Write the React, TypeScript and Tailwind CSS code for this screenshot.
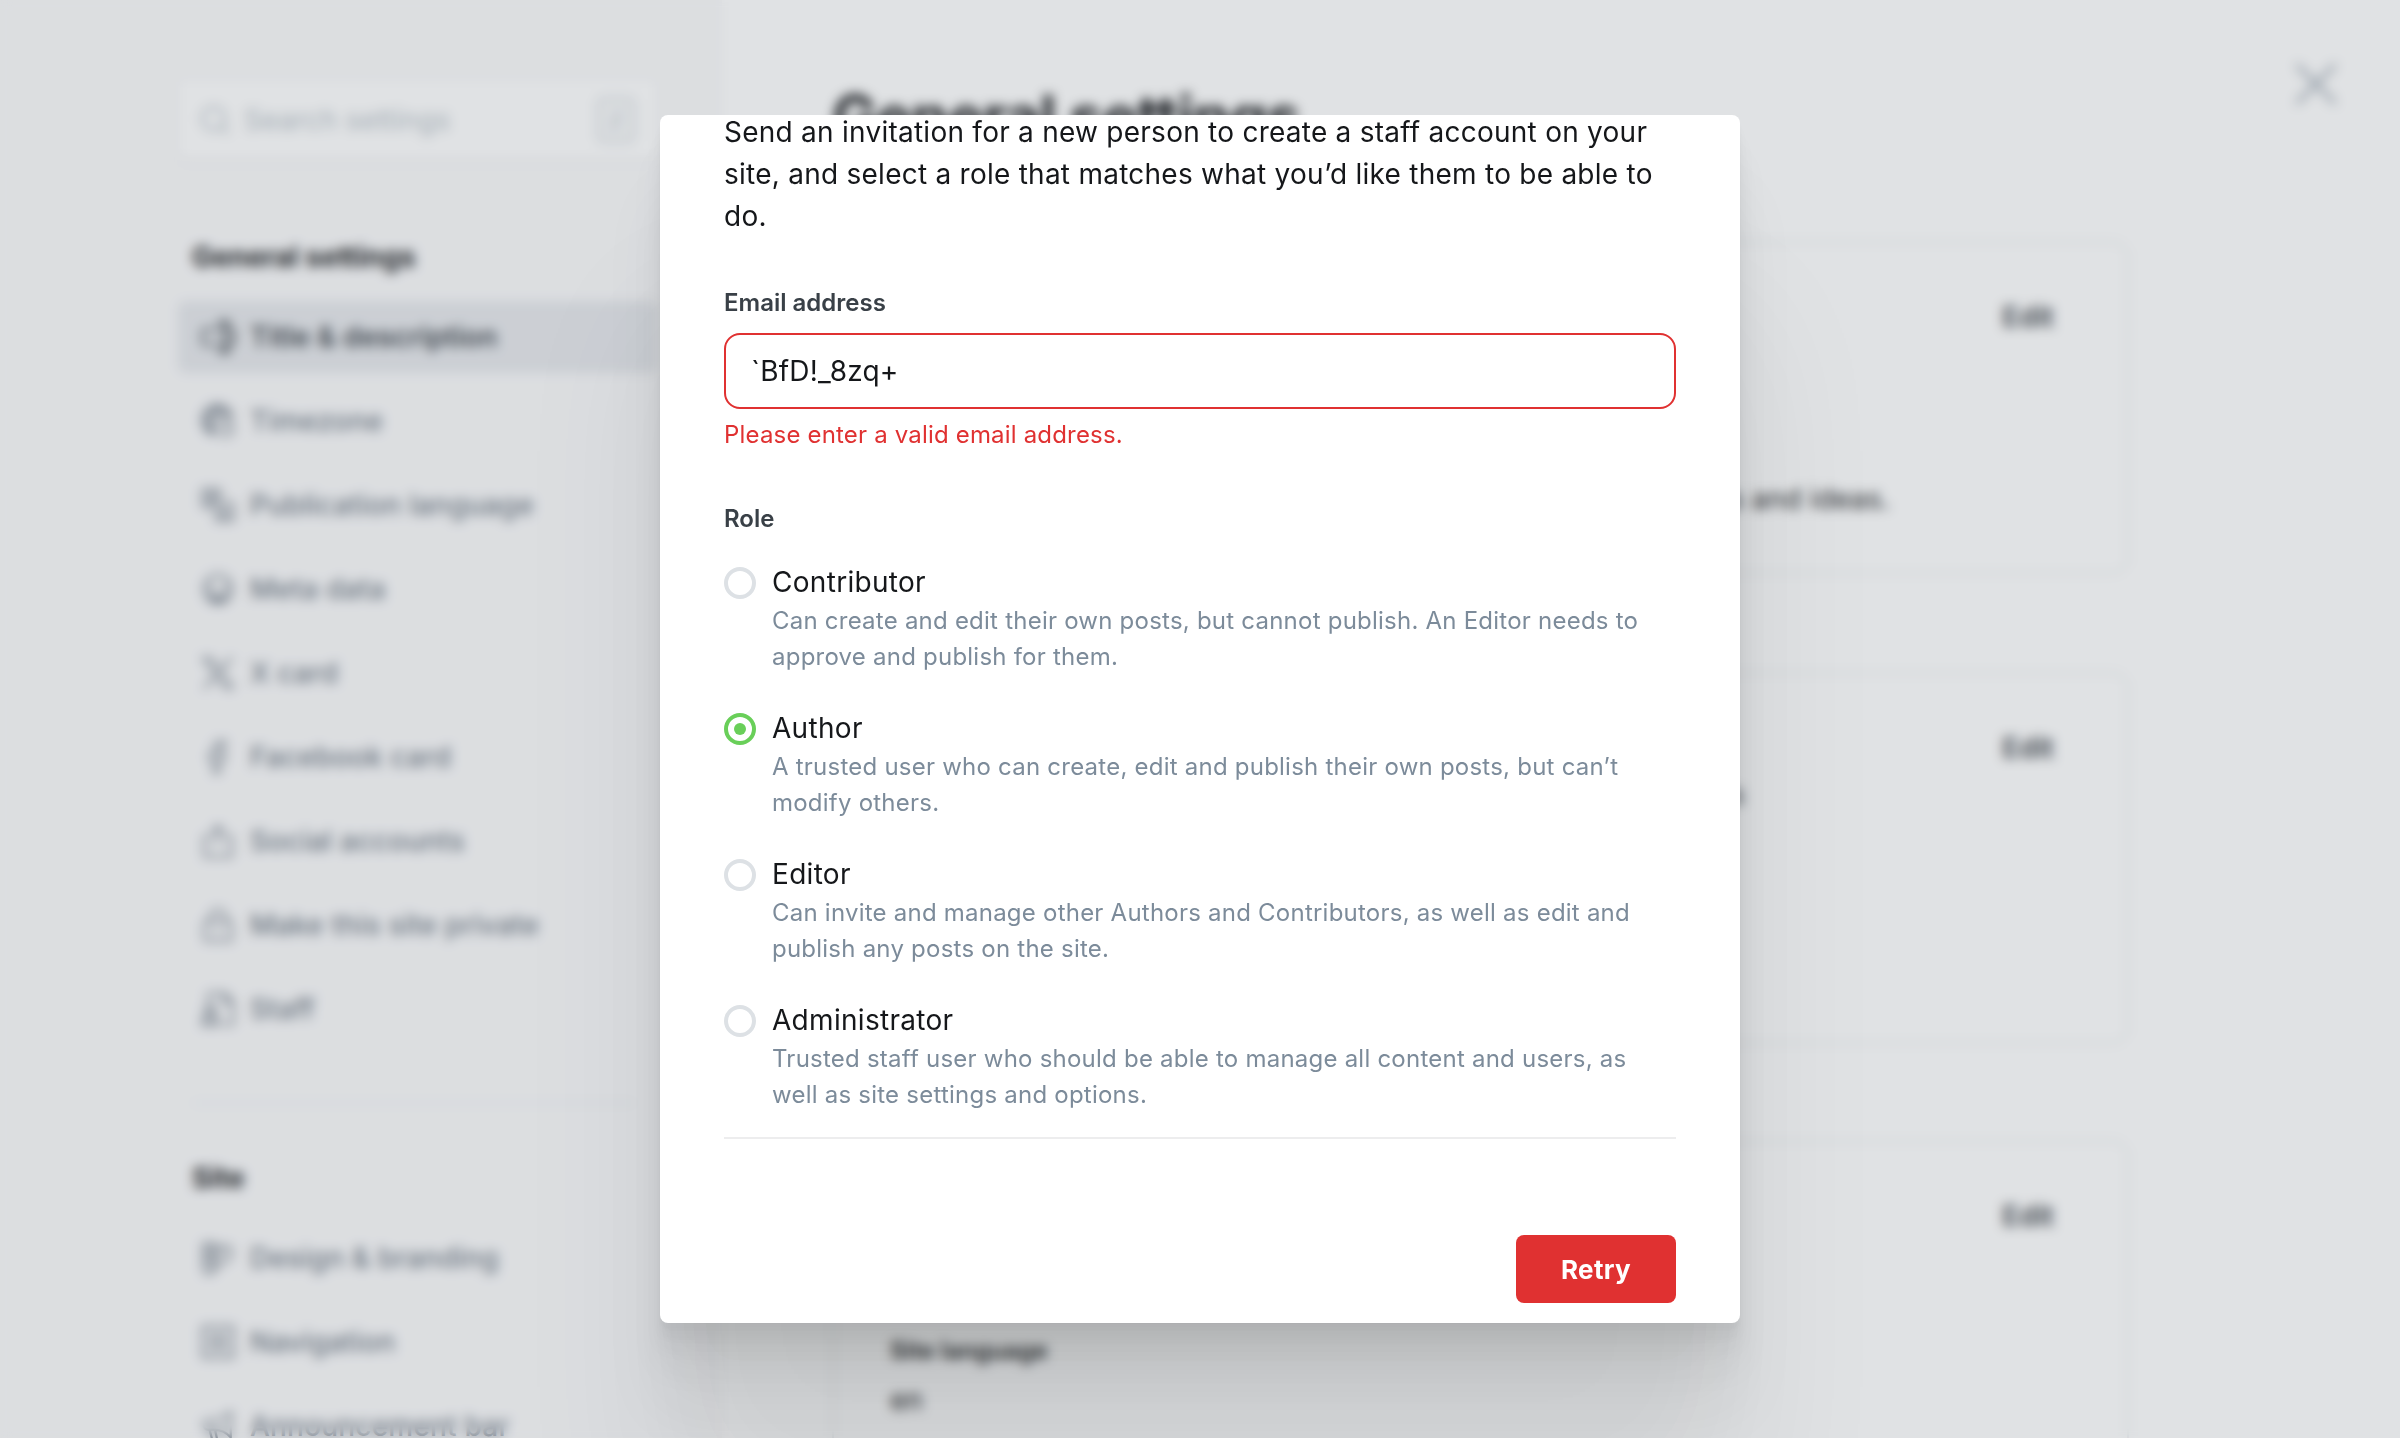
import type { ReactNode } from "react";
import { Search, X } from "lucide-react";

function Icon({ children }: { children: ReactNode }) {
  return (
    <svg
      viewBox="0 0 24 24"
      className="size-[34px] shrink-0"
      fill="none"
      stroke="currentColor"
      strokeWidth="1.6"
      strokeLinecap="round"
      strokeLinejoin="round"
    >
      {children}
    </svg>
  );
}

type NavEntry = { label: string; icon: ReactNode; active?: boolean };

const generalItems: NavEntry[] = [
  {
    label: "Title & description",
    active: true,
    icon: (
      <>
        <path d="M12.500 6.500H3a2 2 0 0 0-2 2v7a2 2 0 0 0 2 2h9.500" />
        <path d="M16.500 1.500v21M13 1.500h7M13 22.500h7" strokeWidth="2.200" />
        <path d="M19 6.500h2a2 2 0 0 1 2 2v7a2 2 0 0 1-2 2h-2" strokeWidth="2.200" />
      </>
    ),
  },
  {
    label: "Timezone",
    icon: (
      <>
        <circle cx="17.500" cy="17.500" r="5.500" strokeWidth="1.300" />
        <path d="M17.500 15v2.500H20" strokeWidth="1.300" />
        <path d="M9 21.500A10.500 10.500 0 1 1 22 10M1 12h9M9 21.500C5 16 6 6 12 1.500M12 1.500c2 2 3.500 4.500 4 7.500M2.500 7h19M2.500 17H8" strokeWidth="1.900" />
      </>
    ),
  },
  {
    label: "Publication language",
    icon: (
      <>
        <rect x="1" y="1" width="12.500" height="12.500" rx="1.500" />
        <path d="M10.500 17v4.500a1.500 1.500 0 0 0 1.500 1.500h9.500a1.500 1.500 0 0 0 1.500-1.500V12a1.500 1.500 0 0 0-1.500-1.500H17" />
        <path d="M4 5h7M7.500 3.500V5M9.500 5c-.5 2.500-2.500 5-5 5.500M5.500 7c1 2 3 3.500 5 3.500M14 20.500l2.500-6.500 2.500 6.500M15 18.500h3.500" />
      </>
    ),
  },
  {
    label: "Meta data",
    icon: (
      <>
        <circle cx="12" cy="12" r="10" />
        <path d="M6.500 8v4.500a5.500 5.500 0 0 0 11 0V8M5 18.500c4 2.500 10 2.500 14 0" strokeWidth="1.900" />
      </>
    ),
  },
  {
    label: "X card",
    icon: <path d="M1.500 1.500H7l15.500 21H17zM21.500 1.500l-8 9M2.500 22.500l8-9" />,
  },
  {
    label: "Facebook card",
    icon: (
      <path d="M17 4.500h-2.200c-1.200 0-1.800.8-1.800 2V10h4l-.6 4H13v9H9v-9H6v-4h3V6c0-3 2-5 5-5h3z" />
    ),
  },
  {
    label: "Social accounts",
    icon: <path d="M6.500 9h-4v14h19V9h-4M12 14V1.500M8 5.500l4-4 4 4" />,
  },
  {
    label: "Make this site private",
    icon: (
      <>
        <rect x="2.500" y="9.500" width="19" height="13.500" rx="1.500" />
        <path d="M6.500 9.500v-3a5.500 5.500 0 0 1 11 0v3M12 15v2.500" />
      </>
    ),
  },
  {
    label: "Staff",
    icon: (
      <>
        <circle cx="6.500" cy="12.500" r="3.300" strokeWidth="2" />
        <path d="M1.500 23v-2a5 5 0 0 1 10 0v2z" strokeWidth="2.200" />
        <path d="M5 6V2.500A1.500 1.500 0 0 1 6.500 1H17l5.500 5.500v15A1.500 1.500 0 0 1 21 23h-5M16 1v6.500h6.500" />
      </>
    ),
  },
];

const siteItems: NavEntry[] = [
  {
    label: "Design & branding",
    icon: (
      <>
        <path d="M2 2h7v17.500a3.500 3.500 0 0 1-7 0zM2 8h7M2 14h7" strokeWidth="1.900" />
        <path d="M9 4h10a2.500 2.500 0 0 1 2.500 2.500V9a7 7 0 0 1-6.500 6l-6 6M9 14l7-9" />
      </>
    ),
  },
  {
    label: "Navigation",
    icon: (
      <>
        <rect x="1" y="1" width="22" height="22" rx="1.500" />
        <path d="m12 5 2 5 5 2-5 2-2 5-2-5-5-2 5-2zM4.500 4.500h1M18.500 4.500h1M4.500 19.500h1M18.500 19.500h1" />
      </>
    ),
  },
  {
    label: "Announcement bar",
    icon: (
      <path d="M5 8h4c5 0 9-2.500 12-6v18c-3-3.500-7-5.500-12-5.500H5A3.200 3.200 0 0 1 5 8zM6 14.500 8 22h3.500L10 15" />
    ),
  },
];

function NavItem({ label, icon, active }: NavEntry) {
  return (
    <li
      className={
        active
          ? "flex h-[72px] items-center gap-[15px] rounded-lg bg-[#e6e8ec] pl-[23px] text-[#394047]"
          : "flex h-[72px] items-center gap-[15px] pl-[23px] text-[#6f7985]"
      }
    >
      <Icon>{icon}</Icon>
      <span
        className={
          active
            ? "text-[28px] font-semibold tracking-[0.1px] whitespace-nowrap"
            : "text-[28px] font-medium tracking-[0.2px] whitespace-nowrap"
        }
      >
        {label}
      </span>
    </li>
  );
}

function Sidebar() {
  return (
    <aside className="h-full w-[722px] shrink-0 bg-[#fafafb] pt-20 pr-[65px] pl-[178px]">
      <div className="flex h-20 items-center rounded-lg bg-white px-5 shadow-sm">
        <Search className="size-[34px] text-[#b5bec6]" strokeWidth={1.8} />
        <span className="ml-3 flex-1 text-[28px] tracking-[0.1px] text-[#b5bec6]">Search settings</span>
        <kbd className="mr-0.5 flex h-[46px] w-[38px] items-center justify-center rounded-md border-2 border-[#ccd2d8] bg-[#f7f8f9] font-[Inter] text-[22px] text-[#a4aeb8]">
          /
        </kbd>
      </div>
      <h2 className="mt-[76px] pl-3.5 text-[28px] leading-[42px] font-bold">General settings</h2>
      <ul className="mt-[23px] flex flex-col gap-3">
        {generalItems.map((item) => (
          <NavItem key={item.label} {...item} />
        ))}
      </ul>
      <div className="mt-[57px] mr-[22px] ml-3.5 border-t-2 border-[#ebeef0]" />
      <h2 className="mt-[53px] pl-3.5 text-[28px] leading-[42px] font-bold">Site</h2>
      <ul className="mt-[23px] flex flex-col gap-3">
        {siteItems.map((item) => (
          <NavItem key={item.label} {...item} />
        ))}
      </ul>
    </aside>
  );
}

function Card({ className, children }: { className: string; children: ReactNode }) {
  return (
    <section className={`relative rounded-2xl border-2 border-[#ebeef0] px-[56px] pt-[53px] ${className}`}>
      <div className="flex justify-end pr-[17px] text-[28px] leading-[42px] font-semibold text-[#394047]">Edit</div>
      {children}
    </section>
  );
}

function SettingsPage() {
  return (
    <div className="flex h-full w-full overflow-hidden bg-white">
      <Sidebar />
      <main className="h-full flex-1 pt-[79px] pl-[110px]">
        <h1 className="text-[60px] leading-[76px] font-bold tracking-[-0.7px]">General settings</h1>
        <div className="mt-[86px] flex w-[1297px] flex-col">
          <Card className="h-[333px]">
            <p className="mt-[140px] flex justify-end pr-[181px] text-[28px] leading-[42px] tracking-[0.2px] whitespace-nowrap">
              Thoughts, stories and ideas.
            </p>
          </Card>
          <Card className="mt-[98px] h-[372px]">
            <p className="mt-[6px] flex justify-end pr-[327px] text-[26px] leading-[39px] whitespace-nowrap">
              published posts
            </p>
          </Card>
          <Card className="mt-[96px] h-[360px]">
            <p className="mt-[96px] text-[24px] leading-9 font-semibold">Site language</p>
            <p className="mt-2.5 text-[28px] leading-[42px]">en</p>
          </Card>
        </div>
      </main>
      <X className="absolute top-[48px] right-[48px] size-[72px] text-[#b0b8c1]" strokeWidth={1.6} />
    </div>
  );
}

const roles = [
  {
    name: "Contributor",
    lines: ["Can create and edit their own posts, but cannot publish. An Editor needs to", "approve and publish for them."],
  },
  {
    name: "Author",
    lines: ["A trusted user who can create, edit and publish their own posts, but can’t", "modify others."],
  },
  {
    name: "Editor",
    lines: ["Can invite and manage other Authors and Contributors, as well as edit and", "publish any posts on the site."],
  },
  {
    name: "Administrator",
    lines: ["Trusted staff user who should be able to manage all content and users, as", "well as site settings and options."],
  },
];

function Role({ name, lines, selected }: { name: string; lines: string[]; selected: boolean }) {
  return (
    <label className="flex gap-4">
      <span
        className={
          selected
            ? "mt-[6px] flex size-8 shrink-0 items-center justify-center rounded-full border-4 border-[#69cf59]"
            : "mt-[6px] size-8 shrink-0 rounded-full border-4 border-[#dde1e5]"
        }
      >
        {selected && <span className="size-3 rounded-full bg-[#69cf59]" />}
      </span>
      <span className="flex flex-col whitespace-nowrap">
        <span className="text-[28px] leading-[42px] tracking-[0.3px]">{name}</span>
        <span className="text-[24px] leading-9 tracking-[0.23px] text-[#7c8b9a]">
          {lines[0]}
          <br />
          {lines[1]}
        </span>
      </span>
    </label>
  );
}

function InviteModal() {
  return (
    <div className="flex h-[1208px] w-[1080px] flex-col overflow-hidden rounded-lg bg-white px-16 shadow-[0_5.6px_4.4px_rgba(0,0,0,0.02),0_13.4px_10.6px_rgba(0,0,0,0.028),0_25px_20px_rgba(0,0,0,0.035),0_44.6px_35.8px_rgba(0,0,0,0.042),0_83.6px_66.8px_rgba(0,0,0,0.05),0_200px_160px_rgba(0,0,0,0.07)]">
      <p className="-mt-1 text-[28px] leading-[42px] tracking-[0.25px] whitespace-nowrap">
        Send an invitation for a new person to create a staff account on your
        <br />
        site, and select a role that matches what you’d like them to be able to
        <br />
        do.
      </p>
      <div className="mt-[48px] text-[24px] leading-9 font-semibold text-[#394047]">Email address</div>
      <div className="mt-[12px] flex h-[76px] items-center rounded-2xl border-2 border-[#e03131] px-[25px] text-[28px] tracking-[0.2px]">
        `BfD!_8zq+
      </div>
      <p className="mt-2 text-[24px] leading-9 tracking-[0.18px] text-[#e03131]">Please enter a valid email address.</p>
      <div className="mt-[48px] text-[24px] leading-9 font-semibold text-[#394047]">Role</div>
      <div className="mt-[24px] flex flex-col gap-8">
        {roles.map((role) => (
          <Role key={role.name} {...role} selected={role.name === "Author"} />
        ))}
      </div>
      <div className="mt-[24px] border-t-2 border-[#ededee]" />
      <div className="mt-[96px] flex justify-end">
        <button className="h-[68px] w-40 rounded-lg bg-[#e03131] text-[26px] font-bold tracking-[0.3px] text-white">
          Retry
        </button>
      </div>
    </div>
  );
}

export default function App() {
  return (
    <div className="relative h-[1438px] w-[2400px] overflow-hidden font-[Inter,sans-serif] text-[#15171a] antialiased">
      <SettingsPage />
      <div className="absolute inset-0 flex items-start justify-center bg-[rgba(98,109,121,0.2)] pt-[115px] backdrop-blur-[6px]">
        <InviteModal />
      </div>
    </div>
  );
}
